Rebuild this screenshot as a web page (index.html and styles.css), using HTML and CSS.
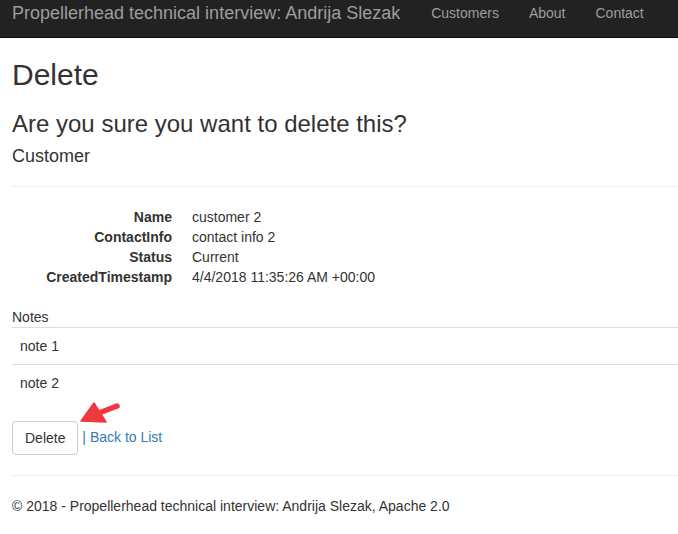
FILE: index.html
```html
<!DOCTYPE html>
<html>
<head>
<meta charset="utf-8">
<title>Delete</title>
<link rel="stylesheet" href="styles.css">
</head>
<body>
<nav class="navbar">
  <a class="brand" href="#">Propellerhead technical interview: Andrija Slezak</a>
  <ul class="nav">
    <li><a href="#">Customers</a></li>
    <li><a href="#">About</a></li>
    <li><a href="#">Contact</a></li>
  </ul>
</nav>
<main class="content">
  <h2 class="h2">Delete</h2>
  <h3 class="h3">Are you sure you want to delete this?</h3>
  <div>
    <h4 class="h4">Customer</h4>
    <hr class="rule top-rule">
    <dl class="dl-horizontal">
      <dt>Name</dt><dd>customer 2</dd>
      <dt>ContactInfo</dt><dd>contact info 2</dd>
      <dt>Status</dt><dd>Current</dd>
      <dt>CreatedTimestamp</dt><dd>4/4/2018 11:35:26 AM +00:00</dd>
    </dl>
    <div class="notes-label">Notes</div>
    <table class="table">
      <tr><td>note 1</td></tr>
      <tr><td>note 2</td></tr>
    </table>
    <form class="actions">
      <button type="button" class="btn">Delete</button>
      <span class="sep">|</span> <a class="link" href="#">Back to List</a>
      <svg class="arrow" width="50" height="30" viewBox="0 0 50 30">
        <line x1="24" y1="15" x2="42" y2="8" stroke="#f0393f" stroke-width="5.5" stroke-linecap="round"/>
        <polygon points="6,23 19,5 31,24" fill="#f0393f" stroke="#f0393f" stroke-width="1.5" stroke-linejoin="round"/>
      </svg>
    </form>
  </div>
  <hr class="rule footer-rule">
  <footer class="footer">
    <p>© 2018 - Propellerhead technical interview: Andrija Slezak, Apache 2.0</p>
  </footer>
</main>
</body>
</html>
```
FILE: styles.css
```css
* { box-sizing: border-box; }
html, body { margin: 0; padding: 0; }
body {
  font-family: "Liberation Sans", Arial, Helvetica, sans-serif;
  font-size: 14px;
  line-height: 20px;
  color: #333;
  background: #fff;
  overflow: hidden;
}
.navbar {
  height: 38px;
  background: #222;
  border-bottom: 1px solid #080808;
  display: flex;
  align-items: flex-start;
  padding-left: 12px;
}
.brand {
  font-size: 18px;
  line-height: 20px;
  color: #9d9d9d;
  text-decoration: none;
  padding-top: 3px;
  margin-right: 16px;
}
.nav {
  list-style: none;
  margin: 0;
  padding: 0;
  display: flex;
}
.nav a {
  display: block;
  color: #9d9d9d;
  text-decoration: none;
  padding: 3px 15px 0;
  line-height: 20px;
}
.content {
  padding-left: 12px;
}
.h2, .h3, .h4 {
  font-family: "Liberation Sans", Arial, Helvetica, sans-serif;
  font-weight: 500;
  line-height: 1.1;
  color: #333;
}
.h2 { font-size: 30px; margin: 20px 0 10px; }
.h3 { font-size: 24px; margin: 20px 0 10px; }
.h4 { font-size: 18px; margin: 10px 0 10px; }
.rule {
  border: 0;
  border-top: 1px solid #eee;
  margin: 20px 0;
  height: 0;
}
.top-rule { margin-top: 19px; }
.dl-horizontal {
  margin: 0 0 20px;
  display: grid;
  grid-template-columns: 160px 1fr;
  column-gap: 20px;
}
.dl-horizontal dt {
  font-weight: bold;
  text-align: right;
  white-space: nowrap;
}
.dl-horizontal dd { margin: 0; }
.notes-label { line-height: 20px; }
.table {
  width: 100%;
  border-collapse: collapse;
  margin-bottom: 20px;
}
.table td {
  padding: 8px;
  border-top: 1px solid #ddd;
  line-height: 20px;
}
.actions {
  position: relative;
  margin: 0;
  line-height: 20px;
}
.btn {
  font-family: "Liberation Sans", Arial, Helvetica, sans-serif;
  font-size: 14px;
  line-height: 20px;
  padding: 6px 12px;
  color: #333;
  background: #fff;
  border: 1px solid #ccc;
  border-radius: 4px;
  vertical-align: middle;
  margin: 0;
}
.sep, .link { color: #337ab7; text-decoration: none; }
.arrow {
  position: absolute;
  left: 63px;
  top: -23px;
}
.footer-rule { margin-top: 20px; }
.footer p { margin: 0 0 10px; }
```
